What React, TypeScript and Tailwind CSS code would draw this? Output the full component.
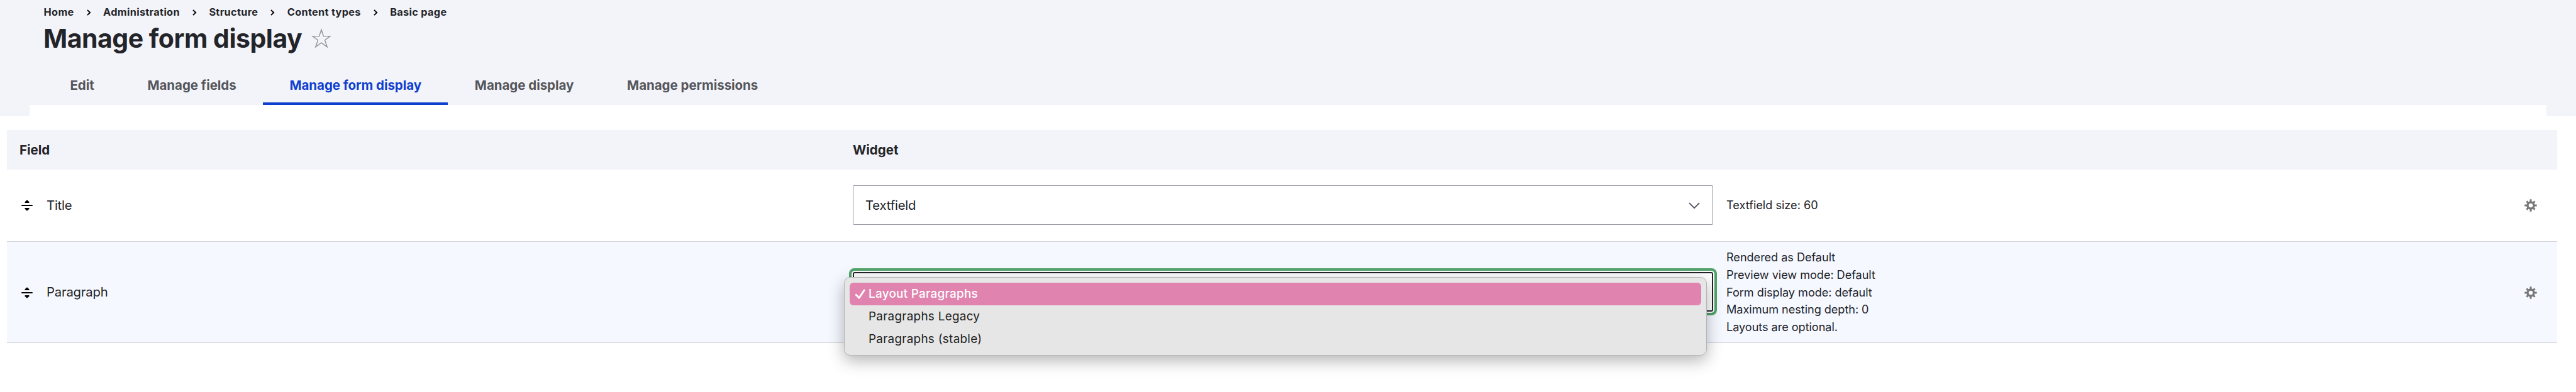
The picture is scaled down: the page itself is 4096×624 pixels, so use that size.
import { Fragment } from "react";

const crumbs = ["Home", "Administration", "Structure", "Content types", "Basic page"];
const tabs = ["Edit", "Manage fields", "Manage form display", "Manage display", "Manage permissions"];
const activeTab = "Manage form display";
const options = ["Layout Paragraphs", "Paragraphs Legacy", "Paragraphs (stable)"];

function CrumbArrow() {
  return (
    <svg className="h-[10px] w-[46.5px]" viewBox="0 0 46.5 10" fill="none" aria-hidden="true">
      <path d="M20.9 1 L25.3 5 L20.9 9" stroke="#000" strokeWidth="1.7" />
    </svg>
  );
}

function Star() {
  return (
    <svg className="h-[32px] w-[32px]" viewBox="0 0 32 32" fill="none" aria-hidden="true">
      <path
        d="M16 2.2 L19.4 12.5 L30 12.6 L21.5 18.9 L25.2 29.6 L16 23.1 L6.8 29.6 L10.5 18.9 L2 12.6 L12.6 12.5 Z"
        stroke="#919297"
        strokeWidth="1.4"
      />
    </svg>
  );
}

function DragHandle() {
  return (
    <svg className="h-[18px] w-[18px]" viewBox="0 0 18 18" fill="#000" aria-hidden="true">
      <rect x="0.2" y="8" width="17.6" height="2" rx="0.6" />
      <path d="M9 0.2 L12.6 3.6 Q12.6 4.9 12 4.9 H6 Q5.4 4.9 5.4 3.6 Z" />
      <path d="M9 17.8 L12.6 14.4 Q12.6 13.1 12 13.1 H6 Q5.4 13.1 5.4 14.4 Z" />
    </svg>
  );
}

function Gear() {
  return (
    <svg className="h-[20px] w-[20px]" viewBox="-10 -10 20 20" fill="none" stroke="#787878" aria-hidden="true">
      <circle r="5" strokeWidth="3.4" />
      <path
        d="M0 -5.5V-9.7M0 5.5V9.7M-5.5 0H-9.7M5.5 0H9.7M-4 -4L-6.6 -6.6M4 -4L6.6 -6.6M-4 4L-6.6 6.6M4 4L6.6 6.6"
        strokeWidth="2.9"
      />
    </svg>
  );
}

function Field({ name }: { name: string }) {
  return (
    <div className="flex w-[1345px] shrink-0 items-center pt-px pl-[23px]">
      <DragHandle />
      <span className="ml-[22px] text-[20.3px] tracking-[-0.2px]">{name}</span>
    </div>
  );
}

function PageHeader() {
  return (
    <header className="h-[184.6px] bg-[#f3f4f9]">
      <nav className="flex h-[39px] items-center pl-[69.6px] text-[16.3px] font-bold tracking-[0.32px]">
        {crumbs.map((crumb, i) => (
          <Fragment key={crumb}>
            {i > 0 && <CrumbArrow />}
            <a>{crumb}</a>
          </Fragment>
        ))}
      </nav>
      <div className="flex h-[44px] items-center pl-[69px]">
        <h1 className="mr-[15px] text-[41px] leading-[44px] font-bold tracking-[-0.5px]">{activeTab}</h1>
        <Star />
      </div>
      <nav className="mt-[22px] flex h-[62px] pl-[69px]">
        {tabs.map((tab) => (
          <a
            key={tab}
            className={
              tab === activeTab
                ? "flex items-center px-[42.4px] text-[20.5px] font-bold tracking-[-0.04px] text-[#0f3fcf] shadow-[inset_0_-4px_0_#0f3fcf]"
                : "flex items-center px-[42.4px] text-[20.5px] font-bold tracking-[-0.04px] text-[#55565b]"
            }
          >
            {tab}
          </a>
        ))}
      </nav>
      <div className="mr-[47px] ml-[47px] h-[18px] bg-white" />
    </header>
  );
}

function OptionMenu() {
  return (
    <ul className="absolute top-[6px] left-[-16px] h-[125px] w-[1372px] rounded-[10px] border border-[#b4b4b6] bg-[#e6e6e6] px-[8px] pt-[8px] text-[18.9px] tracking-[0.27px] shadow-[0_8px_26px_rgba(0,0,0,0.3)]">
      {options.map((option, i) => (
        <li
          key={option}
          className={
            i === 0
              ? "flex h-[36px] items-center rounded-[6px] bg-[#e083af] font-medium text-white"
              : "flex h-[36px] items-center text-[#222]"
          }
        >
          <span className="flex w-[30px] pl-[8px]">
            {i === 0 && (
              <svg className="h-[18px] w-[18px]" viewBox="0 0 18 18" fill="none" aria-hidden="true">
                <path
                  d="M2.2 10.2 L7 15.2 L15.2 3"
                  stroke="#fff"
                  strokeWidth="2.9"
                  strokeLinecap="round"
                  strokeLinejoin="round"
                />
              </svg>
            )}
          </span>
          {option}
        </li>
      ))}
    </ul>
  );
}

export default function App() {
  return (
    <div className="h-[624px] w-[4096px] overflow-hidden bg-white font-['Inter',sans-serif] text-[#232429]">
      <PageHeader />
      <main className="mt-[22px] ml-[11px] w-[4055px]">
        <div className="flex h-[63px] items-center bg-[#f3f4f9] pt-[3px] text-[20.5px] font-bold">
          <span className="w-[1345px] pl-[20px]">Field</span>
          <span>Widget</span>
        </div>

        <div className="flex h-[115.6px] items-center border-b border-[#d3d4d9]">
          <Field name="Title" />
          <div className="flex h-[63px] w-[1368px] items-center justify-between rounded-[2px] border border-[#8e929c] bg-white pt-px pr-[20px] pl-[19px]">
            <span className="text-[20.3px] tracking-[-0.2px]">Textfield</span>
            <svg className="h-[11px] w-[18px]" viewBox="0 0 18 11" fill="none" aria-hidden="true">
              <path d="M1 1.2 L9 9.2 L17 1.2" stroke="#545560" strokeWidth="1.9" />
            </svg>
          </div>
          <p className="ml-[21px] text-[18.2px] tracking-[-0.03px]">Textfield size: 60</p>
          <div className="mr-[32px] ml-auto">
            <Gear />
          </div>
        </div>

        <div className="flex h-[160.8px] items-center border-b border-[#d3d4d9] bg-[#f5f8ff]">
          <Field name="Paragraph" />
          <div className="relative -mt-px h-[63px] w-[1368px] rounded-[3px] border-2 border-[#232429] bg-white shadow-[0_0_0_2px_#fff,0_0_0_6px_#53a36c]">
            <OptionMenu />
          </div>
          <div className="ml-[21px] pt-px text-[18.2px] leading-[27.75px] tracking-[-0.08px]">
            <p>Rendered as Default</p>
            <p>Preview view mode: Default</p>
            <p>Form display mode: default</p>
            <p>Maximum nesting depth: 0</p>
            <p>Layouts are optional.</p>
          </div>
          <div className="mr-[32px] ml-auto pt-px">
            <Gear />
          </div>
        </div>
      </main>
    </div>
  );
}
